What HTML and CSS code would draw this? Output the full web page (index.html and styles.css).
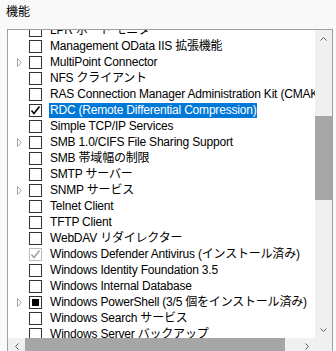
FILE: index.html
```html
<!DOCTYPE html>
<html lang="ja">
<head>
  <meta charset="UTF-8">
  <meta name="viewport" content="width=device-width, initial-scale=1.0">
  <title>機能</title>
  <link rel="stylesheet" href="styles.css">
</head>
<body>
  <div class="titulo">機能</div>
  <div class="panel">
    <div class="cuerpo">
      <div class="vista">
        <ul class="lista">
          <li class="fila"><span class="flecha"></span><span class="caja"></span><span class="texto">LPR ポート モニター</span></li>
          <li class="fila"><span class="flecha"></span><span class="caja"></span><span class="texto">Management OData IIS 拡張機能</span></li>
          <li class="fila"><span class="flecha"><svg width="5" height="9" viewBox="0 0 5 9"><path d="M0.5 0.5 L4.5 4.5 L0.5 8.5 Z" fill="none" stroke="#a6a6a6"/></svg></span><span class="caja"></span><span class="texto">MultiPoint Connector</span></li>
          <li class="fila"><span class="flecha"></span><span class="caja"></span><span class="texto">NFS クライアント</span></li>
          <li class="fila"><span class="flecha"></span><span class="caja"></span><span class="texto">RAS Connection Manager Administration Kit (CMAK)</span></li>
          <li class="fila"><span class="flecha"></span><span class="caja"><svg width="11" height="11" viewBox="0 0 11 11"><path d="M1.5 5.5 L4 8.5 L9.5 1.5" fill="none" stroke="#000" stroke-width="1.6"/></svg></span><span class="texto activo">RDC (Remote Differential Compression)</span></li>
          <li class="fila"><span class="flecha"></span><span class="caja"></span><span class="texto">Simple TCP/IP Services</span></li>
          <li class="fila"><span class="flecha"><svg width="5" height="9" viewBox="0 0 5 9"><path d="M0.5 0.5 L4.5 4.5 L0.5 8.5 Z" fill="none" stroke="#a6a6a6"/></svg></span><span class="caja"></span><span class="texto">SMB 1.0/CIFS File Sharing Support</span></li>
          <li class="fila"><span class="flecha"></span><span class="caja"></span><span class="texto">SMB 帯域幅の制限</span></li>
          <li class="fila"><span class="flecha"></span><span class="caja"></span><span class="texto">SMTP サーバー</span></li>
          <li class="fila"><span class="flecha"><svg width="5" height="9" viewBox="0 0 5 9"><path d="M0.5 0.5 L4.5 4.5 L0.5 8.5 Z" fill="none" stroke="#a6a6a6"/></svg></span><span class="caja"></span><span class="texto">SNMP サービス</span></li>
          <li class="fila"><span class="flecha"></span><span class="caja"></span><span class="texto">Telnet Client</span></li>
          <li class="fila"><span class="flecha"></span><span class="caja"></span><span class="texto">TFTP Client</span></li>
          <li class="fila"><span class="flecha"></span><span class="caja"></span><span class="texto">WebDAV リダイレクター</span></li>
          <li class="fila"><span class="flecha"></span><span class="caja inactiva"><svg width="11" height="11" viewBox="0 0 11 11"><path d="M1.5 5.5 L4 8.5 L9.5 1.5" fill="none" stroke="#a3a3a3" stroke-width="1.6"/></svg></span><span class="texto">Windows Defender Antivirus (インストール済み)</span></li>
          <li class="fila"><span class="flecha"></span><span class="caja"></span><span class="texto">Windows Identity Foundation 3.5</span></li>
          <li class="fila"><span class="flecha"></span><span class="caja"></span><span class="texto">Windows Internal Database</span></li>
          <li class="fila"><span class="flecha"><svg width="5" height="9" viewBox="0 0 5 9"><path d="M0.5 0.5 L4.5 4.5 L0.5 8.5 Z" fill="none" stroke="#a6a6a6"/></svg></span><span class="caja parcial"><span class="relleno"></span></span><span class="texto">Windows PowerShell (3/5 個をインストール済み)</span></li>
          <li class="fila"><span class="flecha"></span><span class="caja"></span><span class="texto">Windows Search サービス</span></li>
          <li class="fila"><span class="flecha"></span><span class="caja"></span><span class="texto">Windows Server バックアップ</span></li>
        </ul>
      </div>
      <div class="barra-v">
        <div class="boton"><svg width="7" height="4" viewBox="0 0 7 4"><path d="M0.5 3.5 L3.5 0.5 L6.5 3.5" fill="none" stroke="#606060"/></svg></div>
        <div class="pista-v"><div class="pulgar-v"></div></div>
        <div class="boton"><svg width="7" height="4" viewBox="0 0 7 4"><path d="M0.5 0.5 L3.5 3.5 L6.5 0.5" fill="none" stroke="#606060"/></svg></div>
      </div>
    </div>
    <div class="pie">
      <div class="boton"><svg width="4" height="7" viewBox="0 0 4 7"><path d="M3.5 0.5 L0.5 3.5 L3.5 6.5" fill="none" stroke="#606060"/></svg></div>
      <div class="pista-h"><div class="pulgar-h"></div></div>
      <div class="boton"><svg width="4" height="7" viewBox="0 0 4 7"><path d="M0.5 0.5 L3.5 3.5 L0.5 6.5" fill="none" stroke="#606060"/></svg></div>
      <div class="esquina"></div>
    </div>
  </div>
</body>
</html>
```

FILE: styles.css
```css
html, body {
  margin: 0;
  height: 100%;
  overflow: hidden;
}
body {
  background: #f9f9f9;
  font-family: "Liberation Sans", "Noto Sans CJK JP", sans-serif;
  font-size: 12px;
  color: #000;
}
.titulo {
  height: 29px;
  padding-left: 6px;
  line-height: 22px;
  font-family: "Noto Sans CJK JP", sans-serif;
}
.panel {
  margin-left: 7px;
  width: 324px;
  border: 1px solid #a0a0a0;
  background: #fff;
}
.cuerpo {
  display: flex;
  height: 308px;
}
.vista {
  flex: 1;
  min-width: 0;
  overflow: hidden;
}
.lista {
  list-style: none;
  margin: -8px 0 0 0;
  padding: 0;
  white-space: nowrap;
}
.fila {
  display: flex;
  align-items: center;
  height: 16px;
}
.fila > span {
  flex: 0 0 auto;
}
.flecha {
  width: 21px;
  display: flex;
  align-items: center;
  justify-content: center;
  padding-left: 2px;
  box-sizing: border-box;
}
.flecha svg {
  display: block;
}
.caja {
  width: 13px;
  height: 13px;
  box-sizing: border-box;
  border: 1px solid #333;
  background: #fff;
  display: flex;
  align-items: center;
  justify-content: center;
}
.caja.inactiva {
  border-color: #bcbcbc;
}
.caja .relleno {
  width: 7px;
  height: 7px;
  background: #000;
}
.texto {
  margin-left: 7px;
  padding: 0 1px;
  line-height: 15px;
  letter-spacing: -0.2px;
}
.texto.activo {
  background: #0078d7;
  color: #fff;
}
.barra-v {
  width: 17px;
  flex: 0 0 17px;
  background: #f0f0f0;
  display: flex;
  flex-direction: column;
}
.boton {
  width: 17px;
  height: 17px;
  flex: 0 0 17px;
  display: flex;
  align-items: center;
  justify-content: center;
}
.pista-v {
  flex: 1;
}
.pulgar-v {
  margin-top: 69px;
  height: 84px;
  background: #a6a6a6;
}
.pie {
  display: flex;
  height: 17px;
  background: #f0f0f0;
}
.pista-h {
  flex: 1;
}
.pulgar-h {
  width: 260px;
  height: 17px;
  background: #a6a6a6;
}
.esquina {
  width: 17px;
  flex: 0 0 17px;
  background: #f0f0f0;
}
```
